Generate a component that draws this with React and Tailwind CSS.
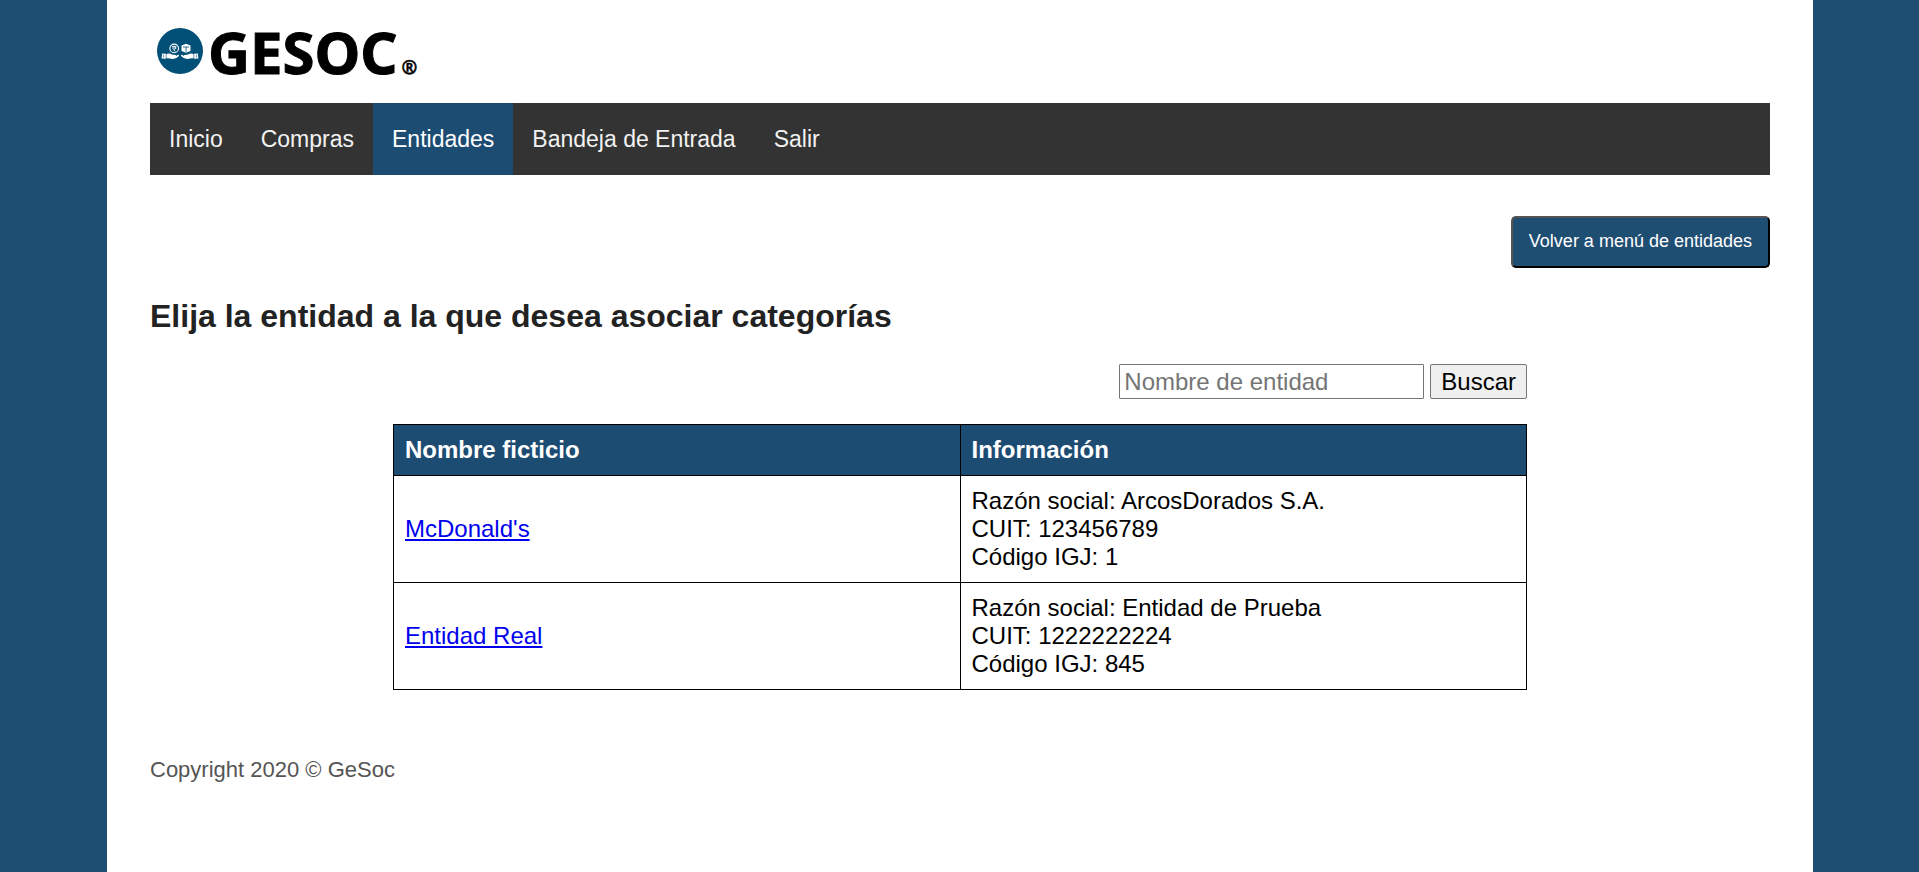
const NAV = [
  { label: "Inicio" },
  { label: "Compras" },
  { label: "Entidades", active: true },
  { label: "Bandeja de Entrada" },
  { label: "Salir" },
];

const ENTITIES = [
  { name: "McDonald's", company: "ArcosDorados S.A.", cuit: "123456789", igj: "1" },
  { name: "Entidad Real", company: "Entidad de Prueba", cuit: "1222222224", igj: "845" },
];

function Emblem() {
  return (
    <svg viewBox="0 0 46 46" className="size-[46px] shrink-0" aria-hidden="true">
      <circle cx="23" cy="23" r="23" fill="#025078" />
      <circle cx="17.2" cy="20.4" r="4.3" fill="none" stroke="#fff" strokeWidth="1.1" />
      <path d="M15 18.4h4.400M15 20h4.400M16.400 18.400c3 0 3 3.200 0 3.200l2 2" fill="none" stroke="#fff" strokeWidth="0.9" />
      <path d="M29 15.800l4.500 1.600v5.600L29 24.800l-4.500-1.800v-5.600z" fill="#fff" />
      <path d="M26 19h6M29 19v5" fill="none" stroke="#025078" strokeWidth="0.8" />
      <g fill="#fff">
        <path d="M5.200 25.600l3.600.2v5l-4.200-.2z" />
        <path d="M9.400 26.100c2-1 4-.6 5.600.5l3.400.3c1 .2.900 1.400-.1 1.500l-2.800.1c2.200.4 4-.6 5.100-1.500 1-.5 1.900.4 1 1.200-2 1.700-4 2.700-6.200 2.700-2.400 0-4-.7-6-.5z" />
        <path d="M40.800 25.600l-3.600.2v5l4.200-.2z" />
        <path d="M36.600 26.100c-2-1-4-.6-5.600.5l-3.400.3c-1 .2-.9 1.400.1 1.500l2.800.1c-2.200.4-4-.6-5.100-1.500-1-.5-1.900.4-1 1.200 2 1.700 4 2.700 6.200 2.700 2.400 0 4-.7 6-.5z" />
      </g>
      <path d="M6.600 26.600v3M39.400 26.600v3" stroke="#025078" strokeWidth="0.6" />
    </svg>
  );
}

export default function App() {
  return (
    <div className="min-h-screen bg-[#1f4e73] pr-[106px] pl-[107px] font-['Liberation_Sans',Arial,sans-serif]">
      <div className="min-h-screen bg-white px-[43px] pt-6 pb-6">
        <header>
          <a href="#inicio" aria-label="GESOC" className="flex h-[55px] items-start gap-[5px] pt-1 pl-[7px] text-black">
            <Emblem />
            <span className="flex items-baseline gap-1 font-['Noto_Sans',sans-serif] font-bold">
              <span className="text-[58px] leading-[48px] [-webkit-text-stroke:1px_black]">GESOC</span>
              <span className="text-[19px] leading-none [-webkit-text-stroke:0.5px_black]">®</span>
            </span>
          </a>
        </header>

        <nav className="mt-6 bg-[#333]">
          <ul className="flex">
            {NAV.map(({ label, active }) => (
              <li key={label}>
                <a
                  href="#"
                  aria-current={active ? "page" : undefined}
                  className={`block px-[19px] py-[22px] text-[23px] leading-[28px] ${
                    active ? "bg-[#1d4c73] text-white" : "text-[#f2f2f2]"
                  }`}
                >
                  {label}
                </a>
              </li>
            ))}
          </ul>
        </nav>

        <main>
          <div className="mt-[41px] flex justify-end">
            <button
              type="button"
              className="h-[52px] rounded-[5px] border-2 border-t-[#555] border-r-black border-b-black border-l-[#555] bg-[#1f4e73] px-4 pb-[2px] text-[18px] text-white"
            >
              Volver a menú de entidades
            </button>
          </div>

          <h1 className="mt-[30px] text-[32px] leading-[36px] font-bold text-[#222]">
            Elija la entidad a la que desea asociar categorías
          </h1>

          <div className="mx-auto mt-[30px] w-[70%]">
            <form className="flex justify-end gap-[6px]" onSubmit={(e) => e.preventDefault()}>
              <input
                type="text"
                aria-label="Nombre de entidad"
                placeholder="Nombre de entidad"
                className="h-[35px] w-[305px] rounded-[1px] border border-[#767676] bg-white px-1 text-[24px] leading-[28px] text-black placeholder:text-[#757575]"
              />
              <button
                type="submit"
                className="h-[35px] rounded-[2px] border border-[#767676] bg-[#efefef] px-[10px] text-[24px] leading-[28px] text-black"
              >
                Buscar
              </button>
            </form>

            <table className="mt-[25px] w-full table-fixed border-collapse text-left text-[24px] leading-[28px] text-black">
              <thead className="bg-[#1d4c73] text-white">
                <tr>
                  <th className="border border-black p-[11px] font-bold">Nombre ficticio</th>
                  <th className="border border-black p-[11px] font-bold">Información</th>
                </tr>
              </thead>
              <tbody>
                {ENTITIES.map(({ name, company, cuit, igj }) => (
                  <tr key={name}>
                    <td className="border border-black p-[11px]">
                      <a href="#" className="text-[#0000ee] underline">
                        {name}
                      </a>
                    </td>
                    <td className="border border-black p-[11px]">
                      <p>Razón social: {company}</p>
                      <p>CUIT: {cuit}</p>
                      <p>Código IGJ: {igj}</p>
                    </td>
                  </tr>
                ))}
              </tbody>
            </table>
          </div>
        </main>

        <footer className="mt-[66px] text-[22px] leading-[28px] text-[#555]">Copyright 2020 © GeSoc</footer>
      </div>
    </div>
  );
}
